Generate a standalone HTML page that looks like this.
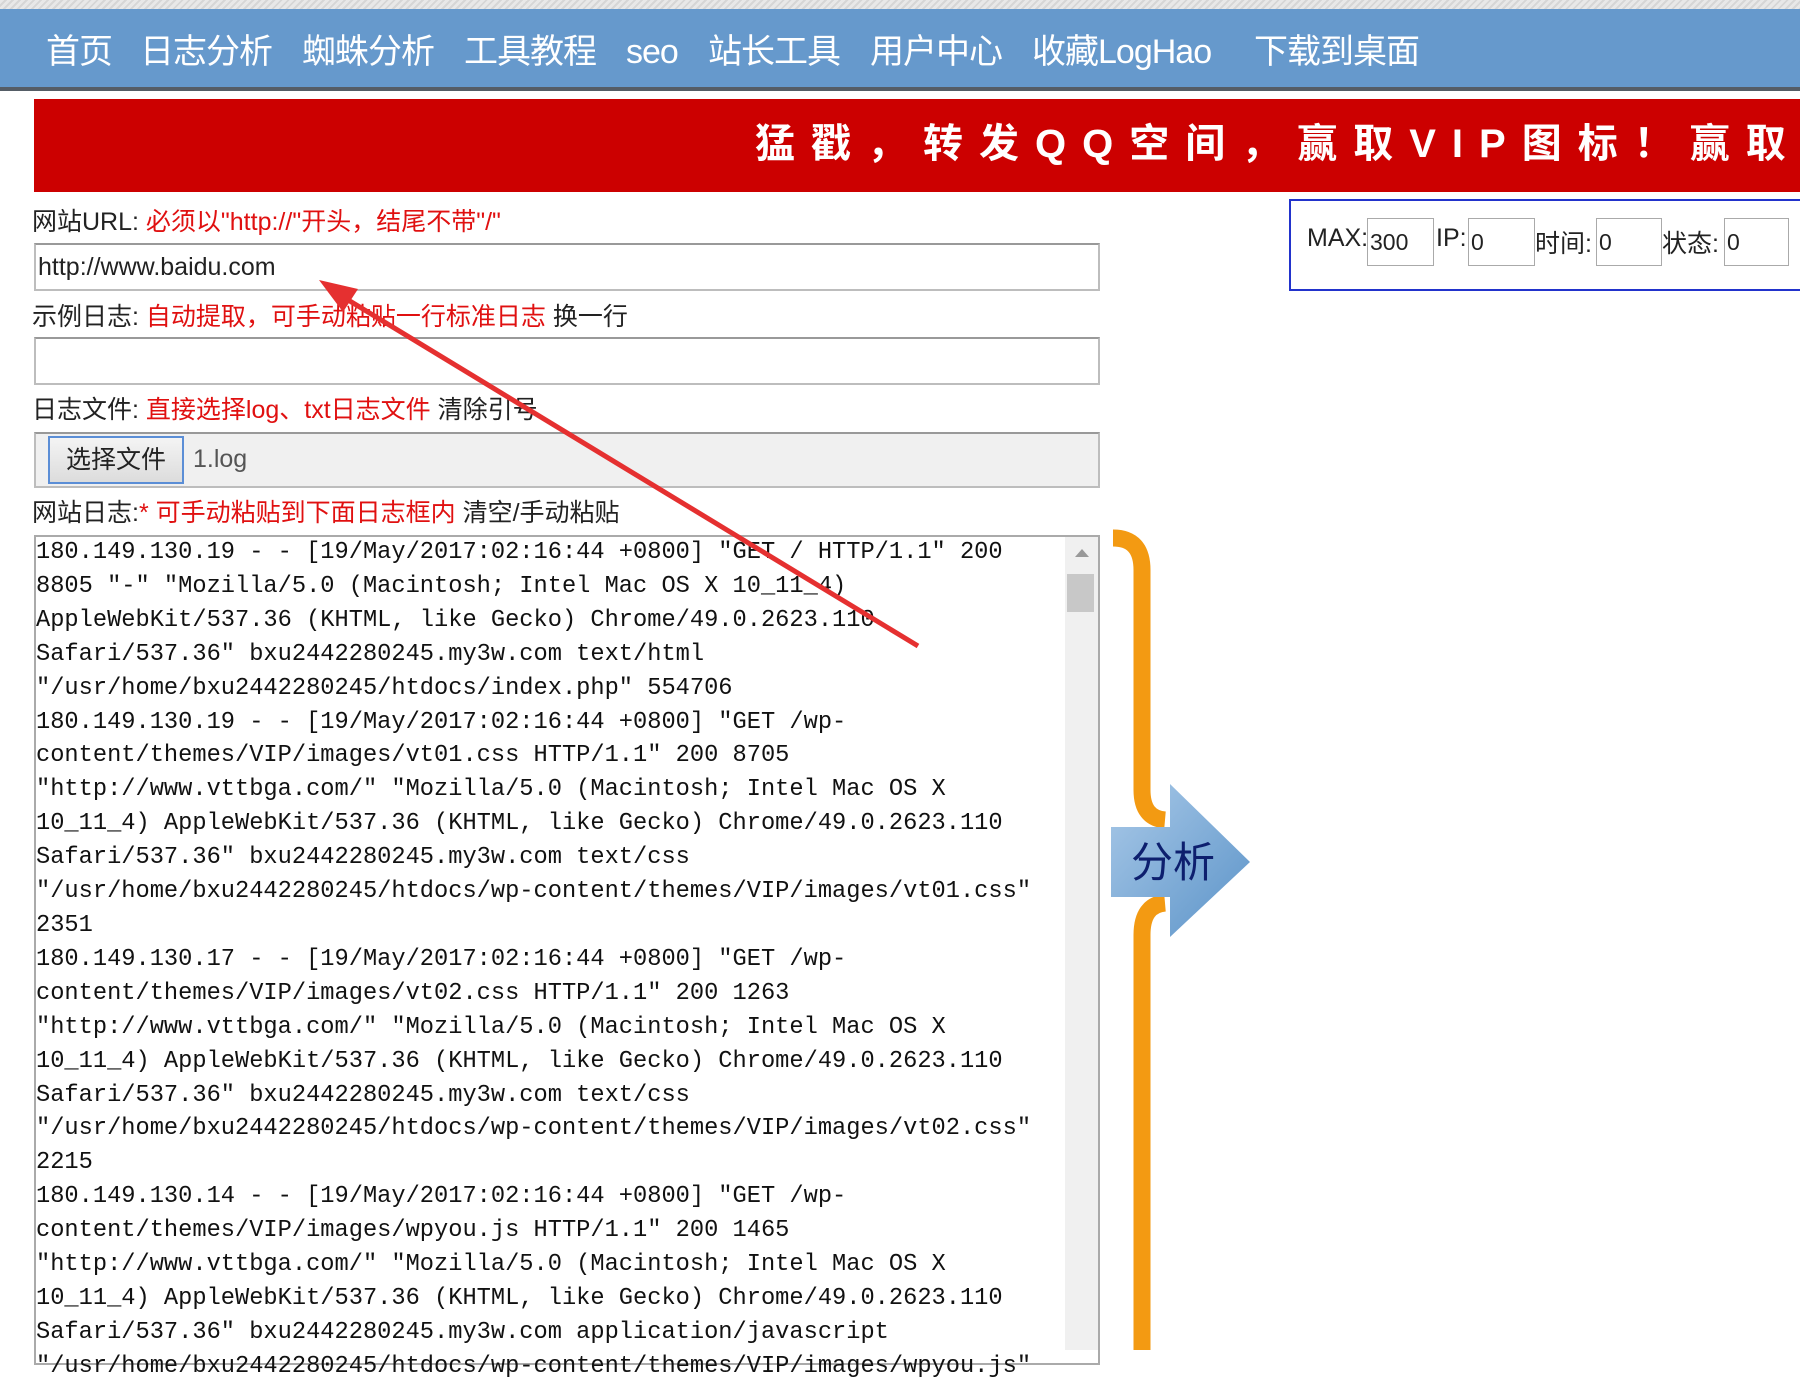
<!DOCTYPE html>
<html><head><meta charset="utf-8">
<style>
*{margin:0;padding:0;box-sizing:border-box}
body{width:1800px;height:1350px;overflow:hidden;background:#fff;position:relative;font-family:"Liberation Sans","Noto Sans CJK SC",sans-serif}
.a{position:absolute;white-space:nowrap}
#top{left:0;top:0;width:1800px;height:10px;background:repeating-linear-gradient(135deg,#e8e8e8 0 3px,#d6d6d6 3px 5px)}
#nav{left:0;top:9px;width:1800px;height:82px;background:#6699cc;border-bottom:4px solid #555d66}
#nav span{position:absolute;top:23px;color:#fff;font-size:34px;line-height:40px;letter-spacing:-1px}
#ban{left:34px;top:99px;width:1766px;height:93px;background:#cc0000}
#ban span{position:absolute;left:721px;top:20px;color:#fff;font-family:"Liberation Sans","Noto Sans CJK SC",sans-serif;font-weight:bold;font-size:40px;letter-spacing:16px;line-height:50px}
.lbl{font-size:25px;line-height:30px;color:#222}
.r{color:#e01010}
.inp{position:absolute;border:2px solid #bdbdbd;border-top-color:#999;background:#fff}
.log{position:absolute;left:36px;font-family:"Liberation Mono",monospace;font-size:23.7px;line-height:33.9px;white-space:pre;color:#111}
.sb{position:absolute;border:1px solid #aaa;background:#fff;height:48px;font-size:23px;line-height:46px;padding-left:2px;color:#222}
</style></head><body>
<div id="top" class="a"></div>
<div id="nav" class="a">
<span style="left:46px">首页</span>
<span style="left:140px">日志分析</span>
<span style="left:302px">蜘蛛分析</span>
<span style="left:464px">工具教程</span>
<span style="left:626px">seo</span>
<span style="left:708px">站长工具</span>
<span style="left:870px">用户中心</span>
<span style="left:1032px">收藏LogHao</span>
<span style="left:1254px">下载到桌面</span>
</div>
<div id="ban" class="a"><span>猛戳，转发QQ空间，赢取VIP图标！赢取</span></div>

<div class="a lbl" style="left:32px;top:207px">网站URL: <span class="r">必须以"http://"开头，结尾不带"/"</span></div>
<div class="inp" style="left:34px;top:243px;width:1066px;height:48px"><span class="a" style="left:2px;top:8px;font-size:25px;color:#222">http://www.baidu.com</span></div>
<div class="a lbl" style="left:32px;top:302px">示例日志: <span class="r">自动提取，可手动粘贴一行标准日志</span> 换一行</div>
<div class="inp" style="left:34px;top:337px;width:1066px;height:48px"></div>
<div class="a lbl" style="left:32px;top:395px">日志文件: <span class="r">直接选择log、txt日志文件</span> 清除引号</div>
<div class="inp" style="left:34px;top:432px;width:1066px;height:56px;background:#f0f0f0"></div>
<div class="a" style="left:48px;top:436px;width:136px;height:48px;border:2px solid #5b8ed6;background:linear-gradient(#f4f4f4,#dcdcdc);font-size:25px;line-height:44px;text-align:center;color:#222">选择文件</div>
<div class="a" style="left:193px;top:445px;font-size:25px;color:#555">1.log</div>
<div class="a lbl" style="left:32px;top:498px">网站日志:<span class="r">* 可手动粘贴到下面日志框内</span> 清空/手动粘贴</div>

<div class="a" style="left:34px;top:535px;width:1066px;height:830px;border:2px solid #aaa;background:#fff"></div>
<div class="a" style="left:1065px;top:537px;width:33px;height:813px;background:#f0f0f0"></div>
<div class="a" style="left:1075px;top:549px;width:0;height:0;border-left:7px solid transparent;border-right:7px solid transparent;border-bottom:8px solid #999"></div>
<div class="a" style="left:1067px;top:574px;width:27px;height:38px;background:#c8c8c8"></div>
<div class="log" style="top:536px">180.149.130.19 - - [19/May/2017:02:16:44 +0800] "GET / HTTP/1.1" 200
8805 "-" "Mozilla/5.0 (Macintosh; Intel Mac OS X 10_11_4)
AppleWebKit/537.36 (KHTML, like Gecko) Chrome/49.0.2623.110
Safari/537.36" bxu2442280245.my3w.com text/html
"/usr/home/bxu2442280245/htdocs/index.php" 554706
180.149.130.19 - - [19/May/2017:02:16:44 +0800] "GET /wp-
content/themes/VIP/images/vt01.css HTTP/1.1" 200 8705
"http://www.vttbga.com/" "Mozilla/5.0 (Macintosh; Intel Mac OS X
10_11_4) AppleWebKit/537.36 (KHTML, like Gecko) Chrome/49.0.2623.110
Safari/537.36" bxu2442280245.my3w.com text/css
"/usr/home/bxu2442280245/htdocs/wp-content/themes/VIP/images/vt01.css"
2351
180.149.130.17 - - [19/May/2017:02:16:44 +0800] "GET /wp-
content/themes/VIP/images/vt02.css HTTP/1.1" 200 1263
"http://www.vttbga.com/" "Mozilla/5.0 (Macintosh; Intel Mac OS X
10_11_4) AppleWebKit/537.36 (KHTML, like Gecko) Chrome/49.0.2623.110
Safari/537.36" bxu2442280245.my3w.com text/css
"/usr/home/bxu2442280245/htdocs/wp-content/themes/VIP/images/vt02.css"
2215
180.149.130.14 - - [19/May/2017:02:16:44 +0800] "GET /wp-
content/themes/VIP/images/wpyou.js HTTP/1.1" 200 1465
"http://www.vttbga.com/" "Mozilla/5.0 (Macintosh; Intel Mac OS X
10_11_4) AppleWebKit/537.36 (KHTML, like Gecko) Chrome/49.0.2623.110
Safari/537.36" bxu2442280245.my3w.com application/javascript
"/usr/home/bxu2442280245/htdocs/wp-content/themes/VIP/images/wpyou.js"</div>

<div class="a" style="left:1289px;top:199px;width:520px;height:92px;border:2px solid #2233cc;background:#fff"></div>
<div class="a" style="left:1307px;top:224px;font-size:25px;color:#222">MAX:</div>
<div class="sb" style="left:1367px;top:218px;width:67px">300</div>
<div class="a" style="left:1436px;top:224px;font-size:25px;color:#222">IP:</div>
<div class="sb" style="left:1468px;top:218px;width:67px">0</div>
<div class="a" style="left:1535px;top:224px;font-size:25px;color:#222">时间:</div>
<div class="sb" style="left:1596px;top:218px;width:66px">0</div>
<div class="a" style="left:1662px;top:224px;font-size:25px;color:#222">状态:</div>
<div class="sb" style="left:1724px;top:218px;width:65px">0</div>

<svg class="a" style="left:0;top:0" width="1800" height="1350">
<path d="M1113 538 Q1142 538 1142 570 L1142 790 Q1142 818 1165 820" fill="none" stroke="#f39a12" stroke-width="17"/>
<path d="M1165 903 Q1142 905 1142 935 L1142 1350" fill="none" stroke="#f39a12" stroke-width="17"/>
<defs><linearGradient id="g" x1="0" y1="0" x2="1" y2="1"><stop offset="0" stop-color="#a9c9e8"/><stop offset="1" stop-color="#5b93c8"/></linearGradient></defs>
<path d="M1111 827 L1170 827 L1170 784 L1250 862 L1170 937 L1170 897 L1111 897 Z" fill="url(#g)"/>
<text x="1131" y="877" font-size="42" fill="#0d1f6e" font-family="Noto Sans CJK SC,sans-serif">分析</text>
<line x1="918" y1="646" x2="335" y2="292" stroke="#e53030" stroke-width="5"/>
<path d="M319 280 L358 289 L343 312 Z" fill="#e53030"/>
</svg>
</body></html>
